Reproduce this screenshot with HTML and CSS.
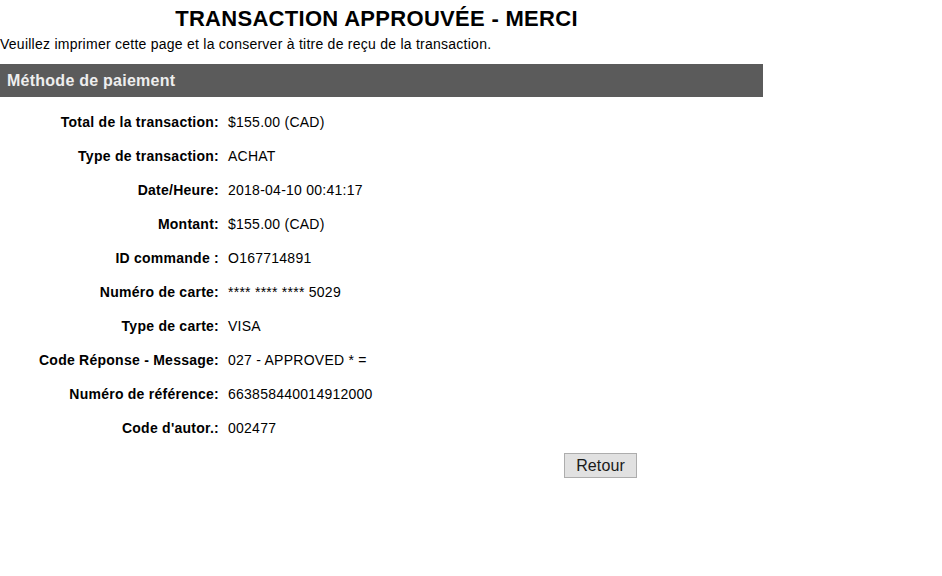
FILE: index.html
```html
<!DOCTYPE html>
<html lang="fr">
<head>
<meta charset="utf-8">
<title>Transaction approuvée</title>
<link rel="stylesheet" href="styles.css">
</head>
<body>
<div class="page">
  <h1 class="title">TRANSACTION APPROUVÉE - MERCI</h1>
  <p class="intro">Veuillez imprimer cette page et la conserver à titre de reçu de la transaction.</p>
  <div class="section-bar">Méthode de paiement</div>
  <div class="details">
    <div class="label">Total de la transaction:</div><div class="value">$155.00 (CAD)</div>
    <div class="label">Type de transaction:</div><div class="value">ACHAT</div>
    <div class="label">Date/Heure:</div><div class="value">2018-04-10 00:41:17</div>
    <div class="label">Montant:</div><div class="value">$155.00 (CAD)</div>
    <div class="label">ID commande :</div><div class="value">O167714891</div>
    <div class="label">Numéro de carte:</div><div class="value">**** **** **** 5029</div>
    <div class="label">Type de carte:</div><div class="value">VISA</div>
    <div class="label">Code Réponse - Message:</div><div class="value">027 - APPROVED * =</div>
    <div class="label">Numéro de référence:</div><div class="value">663858440014912000</div>
    <div class="label">Code d'autor.:</div><div class="value">002477</div>
  </div>
  <div class="actions">
    <button class="btn" type="button">Retour</button>
  </div>
</div>
</body>
</html>
```
FILE: styles.css
```css
html, body {
  margin: 0;
  padding: 0;
  background: #ffffff;
}
body {
  font-family: "Liberation Sans", Arial, sans-serif;
  color: #000;
  letter-spacing: 0.25px;
}
.page {
  width: 763px;
}
.title {
  margin: 0;
  padding-top: 4px;
  font-size: 22px;
  line-height: 30px;
  font-weight: bold;
  text-align: center;
  padding-right: 10px;
  letter-spacing: 0.3px;
}
.intro {
  margin: 2px 0 0 0;
  font-size: 14px;
  line-height: 16px;
}
.section-bar {
  margin-top: 12px;
  height: 33px;
  box-sizing: border-box;
  padding: 1px 0 0 7px;
  background: #5b5b5b;
  color: #eeeeee;
  font-size: 16px;
  font-weight: bold;
  line-height: 32px;
}
.details {
  display: grid;
  grid-template-columns: 219px auto;
  column-gap: 9px;
  grid-auto-rows: 34px;
  align-items: center;
  margin-top: 8px;
  font-size: 14px;
  line-height: 16px;
}
.label {
  text-align: right;
  font-weight: bold;
}
.actions {
  display: flex;
  padding-left: 564px;
  margin-top: 8px;
}
.btn {
  width: 73px;
  height: 25px;
  box-sizing: border-box;
  padding: 0;
  background: #e1e1e1;
  border: 1px solid #adadad;
  border-radius: 0;
  color: #1a1a1a;
  font-family: "Liberation Sans", Arial, sans-serif;
  font-size: 16px;
  line-height: 21px;
  letter-spacing: 0.1px;
}
```
